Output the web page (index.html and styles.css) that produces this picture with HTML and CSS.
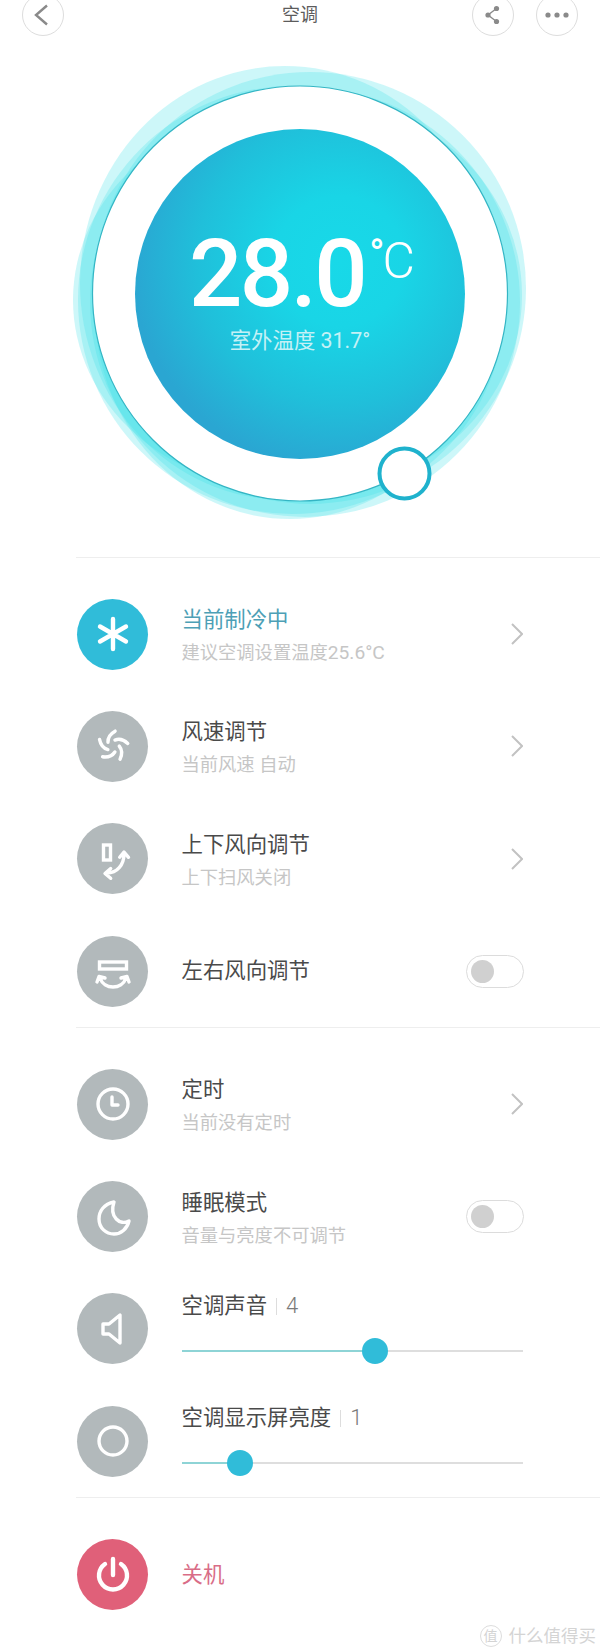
FILE: index.html
```html
<!DOCTYPE html>
<html lang="zh">
<head>
  <meta charset="utf-8">
  <title>空调</title>
  <link rel="stylesheet" href="styles.css">
</head>
<body>
  <header class="topbar">
    <button class="round-btn">
      <svg width="42" height="42" viewBox="0 0 42 42"><path class="line" d="M25 11.5 L14 21 L25 30.5" /></svg>
    </button>
    <h1 class="page-title">空调</h1>
    <div class="topbar-right">
      <button class="round-btn">
        <svg width="42" height="42" viewBox="0 0 42 42">
          <path class="line thin" d="M24.5 14.5 L16 21 L24.5 27.5" />
          <circle class="dot" cx="24.5" cy="14.5" r="2.6" /><circle class="dot" cx="16" cy="21" r="2.6" /><circle class="dot" cx="24.5" cy="27.5" r="2.6" />
        </svg>
      </button>
      <button class="round-btn">
        <svg width="42" height="42" viewBox="0 0 42 42">
          <circle class="dot" cx="12" cy="21" r="2.6" /><circle class="dot" cx="21" cy="21" r="2.6" /><circle class="dot" cx="30" cy="21" r="2.6" />
        </svg>
      </button>
    </div>
  </header>

  <section class="hero">
    <svg class="waves" width="600" height="530" viewBox="0 0 600 530">
      <circle class="wave" cx="305" cy="302" r="215" />
      <circle class="wave" cx="292" cy="300" r="214" />
      <circle class="wave" cx="310" cy="288" r="216" />
      <ellipse class="wave" cx="285" cy="283" rx="205" ry="217" />
      <ellipse class="wave" cx="287" cy="300" rx="214" ry="190" />
      <ellipse class="wave" cx="315" cy="295" rx="207" ry="195" />
      <ellipse class="wave" cx="290" cy="310" rx="195" ry="209" />
      <circle class="ring" cx="300" cy="293.5" r="207.5" />
      <circle class="knob" cx="404.5" cy="473.5" r="25" />
    </svg>
    <div class="disc">
      <div class="temp">28.0<span class="degree">°</span><span class="unit">C</span></div>
      <div class="outdoor">室外温度 31.7°</div>
    </div>
  </section>

  <section class="group">
    <div class="row">
      <div class="icon icon-blue">
        <svg width="70" height="70" viewBox="0 0 70 70"><path class="glyph glyph-bold" d="M35 20 V50 M22 27.5 L48 42.5 M48 27.5 L22 42.5" /></svg>
      </div>
      <div class="text">
        <div class="title title-blue">当前制冷中</div>
        <div class="sub">建议空调设置温度<span class="num">25.6°C</span></div>
      </div>
      <svg class="chevron" width="12" height="22" viewBox="0 0 12 22"><path d="M1 1 L11 11 L1 21" /></svg>
    </div>
    <div class="row">
      <div class="icon">
        <svg width="70" height="70" viewBox="0 0 70 70">
          <g transform="rotate(8 35 35)">
            <path class="glyph" d="M35 20 C31 23 28.5 27 29.5 32" />
            <path class="glyph" d="M35 20 C31 23 28.5 27 29.5 32" transform="rotate(72 35 35)" />
            <path class="glyph" d="M35 20 C31 23 28.5 27 29.5 32" transform="rotate(144 35 35)" />
            <path class="glyph" d="M35 20 C31 23 28.5 27 29.5 32" transform="rotate(216 35 35)" />
            <path class="glyph" d="M35 20 C31 23 28.5 27 29.5 32" transform="rotate(288 35 35)" />
          </g>
        </svg>
      </div>
      <div class="text">
        <div class="title">风速调节</div>
        <div class="sub">当前风速 自动</div>
      </div>
      <svg class="chevron" width="12" height="22" viewBox="0 0 12 22"><path d="M1 1 L11 11 L1 21" /></svg>
    </div>
    <div class="row">
      <div class="icon">
        <svg width="70" height="70" viewBox="0 0 70 70">
          <rect class="glyph square" x="25.5" y="21" width="7" height="15" />
          <path class="glyph" d="M46 30 C46 41 39 49 29 49 M41.7 33.3 L46 28 L50.5 33.3 M32.7 44.5 L27 49.5 L32.7 54.3" />
        </svg>
      </div>
      <div class="text">
        <div class="title">上下风向调节</div>
        <div class="sub">上下扫风关闭</div>
      </div>
      <svg class="chevron" width="12" height="22" viewBox="0 0 12 22"><path d="M1 1 L11 11 L1 21" /></svg>
    </div>
    <div class="row">
      <div class="icon">
        <svg width="70" height="70" viewBox="0 0 70 70">
          <rect class="glyph square" x="21.5" y="26" width="27" height="7" />
          <path class="glyph" d="M22 42 C26 54 44 54 48 42 M19 46 L21 40.5 L27 42 M51 46 L49 40.5 L43 42" />
        </svg>
      </div>
      <div class="text text-single">
        <div class="title">左右风向调节</div>
      </div>
      <div class="toggle"><span class="toggle-knob"></span></div>
    </div>
  </section>

  <section class="group">
    <div class="row">
      <div class="icon">
        <svg width="70" height="70" viewBox="0 0 70 70">
          <circle class="glyph" cx="35" cy="35" r="15" />
          <path class="glyph" d="M34 28 V36 H40" />
        </svg>
      </div>
      <div class="text">
        <div class="title">定时</div>
        <div class="sub">当前没有定时</div>
      </div>
      <svg class="chevron" width="12" height="22" viewBox="0 0 12 22"><path d="M1 1 L11 11 L1 21" /></svg>
    </div>
    <div class="row">
      <div class="icon">
        <svg width="70" height="70" viewBox="0 0 70 70">
          <path class="glyph" d="M36 20 C26 22 21 29 21 37 C21 46 28 52 36 52 C43 52 49 47 51 39 C42 44 31 35 36 20 Z" />
        </svg>
      </div>
      <div class="text">
        <div class="title">睡眠模式</div>
        <div class="sub">音量与亮度不可调节</div>
      </div>
      <div class="toggle"><span class="toggle-knob"></span></div>
    </div>
    <div class="row">
      <div class="icon">
        <svg width="70" height="70" viewBox="0 0 70 70">
          <path class="glyph" d="M25 30 H31 L42 21 V49 L31 40 H25 Z" />
        </svg>
      </div>
      <div class="text slider-text">
        <div class="title">空调声音<span class="sep"></span><span class="value">4</span></div>
        <div class="slider">
          <div class="slider-fill" style="width: 193px"></div>
          <span class="slider-thumb"></span>
        </div>
      </div>
    </div>
    <div class="row">
      <div class="icon">
        <svg width="70" height="70" viewBox="0 0 70 70"><circle class="glyph" cx="35" cy="35" r="14" /></svg>
      </div>
      <div class="text slider-text">
        <div class="title">空调显示屏亮度<span class="sep"></span><span class="value">1</span></div>
        <div class="slider">
          <div class="slider-fill" style="width: 58px"></div>
          <span class="slider-thumb"></span>
        </div>
      </div>
    </div>
  </section>

  <section class="group group-last">
    <div class="row">
      <div class="icon icon-red">
        <svg width="70" height="70" viewBox="0 0 70 70">
          <path class="glyph glyph-bold" d="M27 24 A14 14 0 1 0 43 24 M35 19 V35" />
        </svg>
      </div>
      <div class="text text-single">
        <div class="title title-red">关机</div>
      </div>
    </div>
  </section>

  <div class="watermark">
    <span class="mark">值</span>
    <span>什么值得买</span>
  </div>
</body>
</html>
```

FILE: styles.css
```css
* {
  box-sizing: border-box;
}

html, body {
  height: 1651px;
  overflow: hidden;
}

body {
  position: relative;
  margin: 0;
  background: #fff;
  font-family: Roboto, "Noto Sans CJK SC", sans-serif;
  color: #4a4a4a;
}

/* top bar */
.topbar {
  display: flex;
  align-items: center;
  justify-content: space-between;
  height: 42px;
  margin-top: -6px;
  padding: 0 22px;
}

.page-title {
  margin: 0 0 0 64px;
  font-size: 18px;
  font-weight: 400;
  line-height: 38px;
  color: #5c5c5c;
}

.topbar-right {
  display: flex;
  gap: 22px;
}

.round-btn {
  width: 42px;
  height: 42px;
  padding: 0;
  border: 1px solid #dddddd;
  border-radius: 50%;
  background: #fff;
}

.round-btn svg {
  display: block;
  margin: -1px;
}

.line {
  fill: none;
  stroke: #8a8a8a;
  stroke-width: 2.4;
}

.line.thin {
  stroke-width: 1.4;
}

.dot {
  fill: #8a8a8a;
}

/* temperature dial */
.hero {
  position: relative;
  display: flex;
  justify-content: center;
  height: 521px;
  padding-top: 93px;
}

.waves {
  position: absolute;
  top: -36px;
  left: 0;
}

.wave {
  fill: #3fe0e8;
  opacity: 0.26;
}

.ring {
  fill: #fff;
  stroke: #34b5c4;
  stroke-width: 1.2;
}

.knob {
  fill: #fff;
  stroke: #1fb2cd;
  stroke-width: 4;
}

.disc {
  position: relative;
  width: 330px;
  height: 330px;
  padding-top: 73px;
  border-radius: 50%;
  background: radial-gradient(circle 260px at 62% 40%, #18d9e8 0%, #19d5e6 25%, #20bfda 55%, #2aa6d2 80%, #2aa6d2 100%);
  color: #fff;
  text-align: center;
}

.temp {
  padding-left: 4px;
  font-family: Roboto, sans-serif;
  font-size: 94px;
  font-weight: 500;
  letter-spacing: -2.5px;
  line-height: 106px;
  white-space: nowrap;
}

.degree {
  margin-left: 4px;
  font-size: 40px;
  font-weight: 500;
  letter-spacing: 0;
  vertical-align: 38px;
}

.unit {
  margin-left: -2px;
  font-size: 50px;
  font-weight: 300;
  letter-spacing: 0;
  vertical-align: 28px;
}

.outdoor {
  margin-top: -2px;
  font-size: 21.4px;
  line-height: 32px;
  color: #c4f1f6;
}

/* settings rows */
.group {
  margin-left: 76px;
  padding-top: 20px;
  border-top: 1px solid #eeeeee;
}

.group-last {
  padding-top: 20px;
}

.row {
  display: flex;
  align-items: center;
  height: 112.3px;
  padding-left: 1px;
  padding-right: 77px;
}

.icon {
  flex: none;
  width: 71px;
  height: 71px;
  margin-right: 33.5px;
  padding: 0.5px;
  border-radius: 50%;
  background: #b2b9bb;
}

.icon svg {
  display: block;
}

.icon-blue {
  background: #30bcd9;
}

.icon-red {
  background: #e06079;
}

.glyph {
  fill: none;
  stroke: #fff;
  stroke-width: 3.4;
  stroke-linecap: round;
  stroke-linejoin: round;
}

.glyph-bold {
  stroke-width: 4.4;
}

.square {
  stroke-linecap: butt;
  stroke-linejoin: miter;
}

.text {
  flex: 1;
  padding-top: 5px;
}

.text-single {
  margin-top: -5px;
}

.title {
  font-size: 21.4px;
  line-height: 32px;
  color: #4a4a4a;
}

.title-blue {
  color: #4d9fb6;
}

.title-red {
  color: #d96d87;
}

.sub {
  font-size: 18.3px;
  line-height: 33px;
  color: #c6c6c6;
}

.num {
  font-size: 19.2px;
}

.chevron {
  flex: none;
  fill: none;
  stroke: #c2c2c2;
  stroke-width: 2;
}

.toggle {
  flex: none;
  width: 58px;
  height: 33px;
  margin-right: -1px;
  padding: 4px;
  border: 1px solid #dcdcdc;
  border-radius: 17px;
}

.toggle-knob {
  display: block;
  width: 23px;
  height: 23px;
  border-radius: 50%;
  background: #d0d0d0;
}

/* sliders */
.slider-text {
  padding-top: 0;
  padding-bottom: 16px;
}

.sep {
  display: inline-block;
  width: 1px;
  height: 17px;
  margin: 0 9px;
  background: #dddddd;
  vertical-align: -2px;
}

.value {
  font-size: 22px;
  font-weight: 300;
  color: #7a7a7a;
}

.slider {
  display: flex;
  align-items: center;
  height: 2px;
  margin-top: 28px;
  background: #dedede;
}

.slider-fill {
  height: 2px;
  background: #8ed4d6;
}

.slider-thumb {
  flex: none;
  width: 26px;
  height: 26px;
  margin-left: -13px;
  border-radius: 50%;
  background: #30bcd9;
}

/* site watermark over the page corner */
.watermark {
  position: absolute;
  right: 4px;
  bottom: 3px;
  display: flex;
  align-items: center;
  gap: 7px;
  font-size: 17.5px;
  line-height: 24px;
  color: #d4d4d4;
}

.mark {
  width: 22px;
  height: 22px;
  border: 1px solid #dddddd;
  border-radius: 50%;
  font-size: 14px;
  line-height: 20px;
  text-align: center;
}
```
